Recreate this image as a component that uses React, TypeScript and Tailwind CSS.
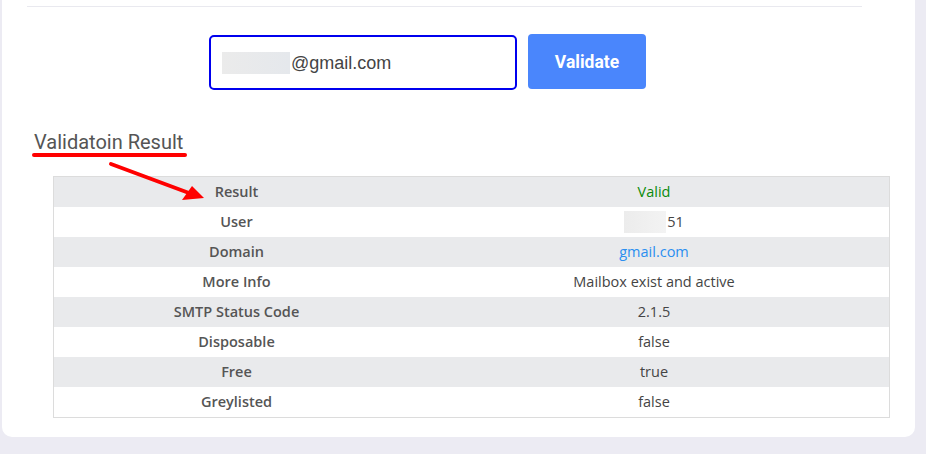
const rows: { label: string; value: React.ReactNode }[] = [
  { label: 'Result', value: <span className="text-[#0a8a0a]">Valid</span> },
  {
    label: 'User',
    value: (
      <>
        <span className="block w-[42px] h-[22px] bg-gradient-to-r from-[#ececec] to-[#f3f3f3] mr-px" />
        <span>51</span>
      </>
    ),
  },
  { label: 'Domain', value: <span className="text-[#2b8ff0]">gmail.com</span> },
  { label: 'More Info', value: 'Mailbox exist and active' },
  { label: 'SMTP Status Code', value: '2.1.5' },
  { label: 'Disposable', value: 'false' },
  { label: 'Free', value: 'true' },
  { label: 'Greylisted', value: 'false' },
];

export default function App() {
  return (
    <div className="w-[926px] h-[454px] bg-[#ecebf3] overflow-hidden font-['Roboto',sans-serif]">
      <div className="ml-[2px] w-[913px] h-[437px] bg-white rounded-b-[10px] relative">
        <div className="mx-[25px] mr-[53px] h-[7px] border-b border-[#e9e9ef]" />

        <div className="flex gap-[11px] mt-[28px] pl-[207px]">
          <div className="w-[308px] h-[55px] border-2 border-[#0000ee] rounded-[5px] flex items-center pl-[11px]">
            <span className="inline-block w-[68px] h-[22px] bg-gradient-to-r from-[#ebebeb] to-[#e5e8ec] mr-[1px]" />
            <span className="font-['Liberation_Sans',sans-serif] text-[18px] text-[#444] pt-px">@gmail.com</span>
          </div>
          <button className="w-[118px] h-[55px] -mt-[1px] pt-[2px] bg-[#4a86fc] rounded-[4px] text-white font-bold text-[17.5px]">
            Validate
          </button>
        </div>

        <div className="mt-[40px] ml-[31px] w-fit">
          <div className="text-[20px] text-[#555] leading-[24px] px-[1px]">Validatoin Result</div>
          <div className="h-[4px] w-[155px] bg-[#ff0000] rounded-full -mt-[1px] -ml-[1px]" />
        </div>

        <svg className="absolute left-[102px] top-[158px]" width="110" height="50" viewBox="0 0 110 50">
          <line x1="7" y1="6" x2="85" y2="35" stroke="#ff0000" strokeWidth="4" strokeLinecap="round" />
          <polygon points="88,28 78,42 100,40" fill="#ff0000" />
        </svg>

        <div className="mt-[19px] ml-[51px] w-[837px] border border-[#dcdcdc] font-['Open_Sans',sans-serif] text-[14.5px]">
          {rows.map((r, i) => (
            <div key={r.label} className={`flex h-[30px] items-center ${i % 2 === 0 ? 'bg-[#e9eaec]' : 'bg-white'}`}>
              <div className="w-[365px] text-center font-semibold text-[#555]">{r.label}</div>
              <div className="flex-1 flex items-center justify-center text-[#444]">{r.value}</div>
            </div>
          ))}
        </div>
      </div>
    </div>
  );
}
